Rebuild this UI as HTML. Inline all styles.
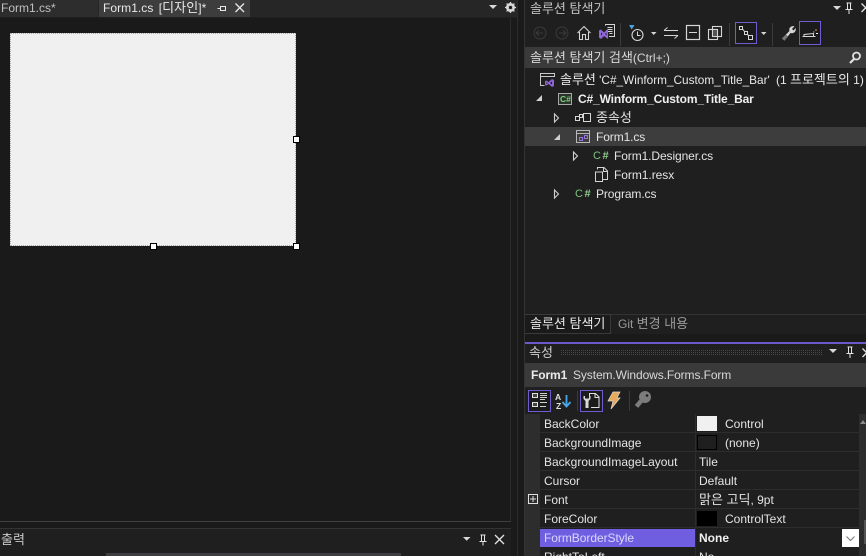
<!DOCTYPE html>
<html><head><meta charset="utf-8">
<style>
html,body{margin:0;padding:0;width:866px;height:556px;overflow:hidden;background:#1a1a1a}
body{position:relative;font-family:"Liberation Sans","Noto Sans CJK KR",sans-serif;font-size:12px;color:#e4e4e4}
.a{position:absolute}
.t{position:absolute;white-space:nowrap;line-height:16px;height:16px}
.k{font-size:13px;line-height:16px}
svg{position:absolute;overflow:visible}
.row{position:absolute;left:540px;width:319px;height:18px;border-bottom:1px solid #2d2d2d}
.v{position:absolute;left:695px;width:1px;background:#2d2d2d;top:414px;height:142px}
.c{font-size:11px;color:#7cc47c;letter-spacing:1.500px}
.c b{color:#8fd08f}
</style></head><body>

<!-- left tab bar -->
<div class="a" style="left:0;top:0;width:517px;height:17px;background:#262626"></div>
<div class="a" style="left:0;top:0;width:98px;height:17px;background:#2d2d2d"></div>
<div class="a" style="left:99px;top:0;width:151px;height:17px;background:#3d3d3d"></div>
<div class="a" style="left:0;top:17px;width:517px;height:1px;background:#1f1f1f"></div>
<div class="t" style="left:1px;top:0;color:#c0c0c0">Form1.cs*</div>
<div class="t" style="left:103px;top:0;color:#e8e8e8;word-spacing:2px;letter-spacing:.05px">Form1.cs [<span class="k">디자인</span>]*</div>
<svg style="left:217px;top:4px" width="10" height="10"><path d="M0.5 4.5H3M3.5 2V7M3.5 2.5H8.5V6.5H3.5" fill="none" stroke="#e8e8e8"/></svg>
<svg style="left:235px;top:3px" width="10" height="10"><path d="M0.5 0.5L9 9M9 0.5L0.5 9" fill="none" stroke="#e8e8e8" stroke-width="1.3"/></svg>
<svg style="left:489px;top:5px" width="9" height="5"><path d="M0 0H8L4 4Z" fill="#d8d8d8"/></svg>
<svg style="left:505px;top:2px" width="11" height="11"><circle cx="5.5" cy="5.5" r="3.4" fill="none" stroke="#d8d8d8" stroke-width="2.2"/><path d="M5.5 0V11M0 5.5H11M1.6 1.6L9.4 9.4M9.4 1.6L1.6 9.4" stroke="#d8d8d8" stroke-width="1.3"/><circle cx="5.5" cy="5.5" r="1.6" fill="#1a1a1a"/></svg>

<!-- designer form -->
<div class="a" style="left:10px;top:33px;width:284px;height:211px;background:#f0f0f0;border:1px dotted #a8a8a8"></div>
<div class="a" style="left:293px;top:136px;width:5px;height:5px;background:#fff;border:1px solid #000"></div>
<div class="a" style="left:150px;top:243px;width:5px;height:5px;background:#fff;border:1px solid #000"></div>
<div class="a" style="left:293px;top:243px;width:5px;height:5px;background:#fff;border:1px solid #000"></div>

<!-- design area border -->
<div class="a" style="left:0;top:521px;width:511px;height:1px;background:#3f3f3f"></div>
<div class="a" style="left:510px;top:18px;width:1px;height:503px;background:#2b2b2b"></div>

<!-- output panel -->
<div class="a" style="left:0;top:528px;width:511px;height:28px;background:#1f1f1f;border-top:1px solid #333"></div>
<div class="t" style="left:1px;top:532px;color:#c8c8c8"><span class="k">출력</span></div>
<svg style="left:463px;top:537px" width="8" height="5"><path d="M0 0H7.5L3.7 3.8Z" fill="#d8d8d8"/></svg>
<svg style="left:477px;top:534px" width="12" height="12" ><path d="M3.5 1H8.5M4.5 1V7M7.5 1V7M2.5 7.5H9.5M6 7.5V11.5" fill="none" stroke="#e4e4e4"/></svg>
<svg style="left:494px;top:534px" width="11" height="11"><path d="M1 1L10 10M10 1L1 10" fill="none" stroke="#e4e4e4" stroke-width="1.3"/></svg>
<div class="a" style="left:106px;top:553px;width:295px;height:3px;background:#3e3e42"></div>

<!-- right side -->
<div class="a" style="left:517px;top:0;width:1px;height:556px;background:#2b2b2b"></div>
<div class="a" style="left:524px;top:0;width:342px;height:556px;background:#1f1f1f;border-left:1px solid #333;box-sizing:border-box"></div>

<!-- solution explorer header -->
<div class="t" style="left:530px;top:1px;color:#c0c0c0"><span class="k">솔루션 탐색기</span></div>
<svg style="left:833px;top:6px" width="9" height="5"><path d="M0 0H8L4 4Z" fill="#d8d8d8"/></svg>
<svg style="left:843px;top:2px" width="12" height="13"><path d="M3.5 1H8.5M4.5 1V7M7.5 1V7M2.5 7.5H9.5M6 7.5V12" fill="none" stroke="#e4e4e4"/></svg>
<svg style="left:861px;top:3px" width="10" height="10"><path d="M0.5 0.5L9 9M9 0.5L0.5 9" fill="none" stroke="#e4e4e4" stroke-width="1.3"/></svg>

<!-- toolbar -->
<svg style="left:525px;top:18px" width="341" height="29">
 <circle cx="15" cy="15" r="6" fill="none" stroke="#3a3a3a"/><path d="M18 15H11.500M14 12L11 15L14 18" fill="none" stroke="#3a3a3a"/>
 <circle cx="37" cy="15" r="6" fill="none" stroke="#3a3a3a"/><path d="M34 15H40.500M38 12L41 15L38 18" fill="none" stroke="#3a3a3a"/>
 <path d="M52.500 15L59 8.500L65.500 15M54.500 14V21.500H57.500V16.500H60.500V21.500H63.500V14" fill="none" stroke="#d6d6d6" stroke-width="1.100"/>
 <path d="M80.500 7.500V6.500H89.500V18.500H84" fill="none" stroke="#d6d6d6"/><path d="M82.500 9.500H87.500M82.500 11.500H87.500M83 13.500H87.500M84.500 15.500H87.500" stroke="#d6d6d6"/>
 <path d="M74 12.500L76 11.500L79 14.500L83 10.500V21L79 18L76 21L74 19.500ZM76 14.500V17.500L77.500 16ZM80 16L81.500 17.500V14.500Z" fill="#9168d8" fill-rule="evenodd"/>
 <rect x="95" y="5" width="1" height="23" fill="#3b3b3b"/>
 <path d="M104 7H109.500L106.700 11.500Z" fill="#4aa3e8"/>
 <circle cx="112.500" cy="17" r="5.500" fill="none" stroke="#d6d6d6" stroke-width="1.100"/><path d="M112.500 13.500V17.500H115.500" fill="none" stroke="#d6d6d6"/>
 <path d="M126 14H131.500L128.700 17Z" fill="#d6d6d6"/>
 <path d="M139 12.500H153M139 12.500L142.500 9.500M139 17.500H153M153 17.500L149.500 20.500" fill="none" stroke="#d6d6d6"/>
 <rect x="161.500" y="7.500" width="13" height="14" fill="none" stroke="#d6d6d6" stroke-width="1.200"/><path d="M164 14.500H172" stroke="#d6d6d6"/>
 <rect x="187.500" y="8.500" width="9" height="10" fill="none" stroke="#d6d6d6" stroke-width="1.100"/><rect x="183.500" y="11.500" width="9" height="10" fill="none" stroke="#d6d6d6" stroke-width="1.100"/><rect x="188" y="12" width="4" height="6" fill="#555"/>
 <rect x="204" y="5" width="1" height="23" fill="#3b3b3b"/>
 <rect x="210.500" y="4.500" width="21" height="21" fill="#1b1b1b" stroke="#6d5dd3" stroke-width="1"/>
 <rect x="214.500" y="8.500" width="3" height="3" fill="none" stroke="#d6d6d6"/><rect x="219.500" y="13.500" width="3" height="3" fill="none" stroke="#d6d6d6"/><rect x="223.500" y="17.500" width="4" height="4" fill="none" stroke="#d6d6d6"/>
 <path d="M217.500 11L219.500 13.500M222.500 16L223.500 18" stroke="#d6d6d6"/>
 <path d="M236 14H241.500L238.700 17Z" fill="#d6d6d6"/>
 <rect x="247" y="5" width="1" height="23" fill="#3b3b3b"/>
 <path d="M257 20.500L264.500 13C263.500 10 266 7.500 269.500 8.300L267 11L268.500 12.500L270.700 10C271.500 13.500 268.500 16 265.500 15L259.500 22.500Z" fill="#d6d6d6"/><path d="M257 20.500L261 16.500L263 18.500L259.500 22.500Z" fill="#777"/>
 <rect x="274.500" y="3.500" width="21" height="23" fill="#1b1b1b" stroke="#6d5dd3"/>
 <path d="M277.500 18.500H290.500M279 18.500V16.500L288.500 15.500V18.500" fill="none" stroke="#d6d6d6"/>
 <path d="M290 12H292M288 14H289.500" stroke="#d89a3c"/><rect x="291" y="15" width="2" height="1" fill="#eee"/>
</svg>

<!-- search -->
<div class="a" style="left:525px;top:47px;width:341px;height:21px;background:#3a3a3a"></div>
<div class="t" style="left:530px;top:50px;color:#d8d8d8"><span class="k">솔루션 탐색기 검색</span>(Ctrl+;)</div>
<svg style="left:849px;top:51px" width="13" height="13"><circle cx="7.500" cy="5" r="3.500" fill="none" stroke="#e0e0e0" stroke-width="1.800"/><path d="M5 8L1 12" stroke="#e0e0e0" stroke-width="2.200"/></svg>

<!-- tree -->
<div class="a" style="left:525px;top:127px;width:341px;height:19px;background:#3d3d3d"></div>
<svg style="left:525px;top:68px" width="341" height="136">
 <path d="M19.500 17.500H15.500V5.500H29.500V9M15.500 8.500H29.500" fill="none" stroke="#c8c8c8"/>
 <path d="M20 13L21.500 12.500L23.500 14L27 11L29 12V18L27 19L23.500 16L21.500 17.500L20 17Z M21.500 14V16.200L22.500 15Z M25 15L27 16.500V13.500Z" fill="#8e63d4" fill-rule="evenodd"/>
 <path d="M11 33L17 33V27Z" fill="#d0d0d0"/>
 <path d="M29.500 46V54L33.500 50Z" fill="none" stroke="#d0d0d0" stroke-width="1.100"/>
 <path d="M29 72L35 72V66Z" fill="#d0d0d0"/>
 <path d="M48.500 84V92L52.500 88Z" fill="none" stroke="#d0d0d0" stroke-width="1.100"/>
 <path d="M29.500 122V130L33.500 126Z" fill="none" stroke="#d0d0d0" stroke-width="1.100"/>
 <rect x="33.500" y="25.500" width="13" height="11" fill="#2a332a" stroke="#a8a8a8"/>
 <rect x="50.500" y="48.500" width="4" height="4" fill="none" stroke="#d8d8d8"/><rect x="54.500" y="46.500" width="3" height="3" fill="none" stroke="#d8d8d8"/><rect x="58.500" y="45.500" width="7" height="8" fill="none" stroke="#d8d8d8"/>
 <rect x="51.500" y="62.500" width="13" height="12" fill="none" stroke="#b8b8b8"/><path d="M52 65.500H64" stroke="#b8b8b8"/>
 <rect x="54.500" y="69.500" width="3" height="3" fill="none" stroke="#9a74dd"/><rect x="59.500" y="67.500" width="3" height="3" fill="none" stroke="#9a74dd"/>
 <path d="M72.500 101.500V99.500H79L82.500 103V111.500H78M72.500 104H70.500V113.500H77.500V104Z" fill="none" stroke="#d4d4d4"/><path d="M78.500 100V103.500H82.500" fill="none" stroke="#d4d4d4"/>
</svg>
<div class="t" style="left:560px;top:72px;font-size:11.800px;color:#e8e8e8"><span class="k">솔루션</span> 'C#_Winform_Custom_Title_Bar'</div>
<div class="t" style="left:776px;top:72px;color:#e8e8e8">(1 <span class="k">프로젝트의</span> 1)</div>
<div class="t" style="left:560px;top:91px;font-size:8.500px;font-weight:bold;color:#7ed07e">C#</div>
<div class="t" style="left:578px;top:91px;font-weight:bold;color:#f0f0f0;letter-spacing:-.15px">C#_Winform_Custom_Title_Bar</div>
<div class="t" style="left:596px;top:110px"><span class="k">종속성</span></div>
<div class="t" style="left:596px;top:129px;letter-spacing:-.1px">Form1.cs</div>
<div class="t c" style="left:593px;top:148px">C<b>#</b></div>
<div class="t" style="left:614px;top:148px;letter-spacing:-.1px">Form1.Designer.cs</div>
<div class="t" style="left:614px;top:167px;letter-spacing:-.05px">Form1.resx</div>
<div class="t c" style="left:575px;top:186px">C<b>#</b></div>
<div class="t" style="left:596px;top:186px;letter-spacing:-.1px">Program.cs</div>

<!-- bottom tabs -->
<div class="a" style="left:525px;top:314px;width:341px;height:1px;background:#333"></div>
<div class="a" style="left:525px;top:314px;width:86px;height:20px;background:#1a1a1a;border-right:1px solid #3a3a3a;border-bottom:1px solid #3a3a3a;border-top:1px solid #3a3a3a;box-sizing:border-box"></div>
<div class="t" style="left:530px;top:316px;color:#e8e8e8"><span class="k">솔루션 탐색기</span></div>
<div class="t" style="left:618px;top:316px;color:#9a9a9a">Git <span class="k">변경 내용</span></div>
<div class="a" style="left:525px;top:334px;width:341px;height:8px;background:#1a1a1a"></div>

<!-- properties -->
<div class="a" style="left:525px;top:342px;width:341px;height:2px;background:#6a5acd"></div>
<div class="t" style="left:529px;top:345px;color:#d0d0d0"><span class="k">속성</span></div>
<svg style="left:561px;top:350px" width="262" height="5"><defs><pattern id="d" width="2" height="2" patternUnits="userSpaceOnUse"><rect width="1" height="1" fill="#484848"/></pattern></defs><rect width="262" height="5" fill="url(#d)"/></svg>
<svg style="left:829px;top:349px" width="9" height="5"><path d="M0 0H8L4 4Z" fill="#d8d8d8"/></svg>
<svg style="left:844px;top:346px" width="12" height="13"><path d="M3.500 1H8.500M4.500 1V7M7.500 1V7M2.500 7.500H9.500M6 7.500V12" fill="none" stroke="#e4e4e4"/></svg>
<svg style="left:862px;top:348px" width="10" height="10"><path d="M0.500 0.500L9 9M9 0.500L0.500 9" fill="none" stroke="#e4e4e4" stroke-width="1.300"/></svg>
<div class="a" style="left:525px;top:363px;width:341px;height:24px;background:#3a3a3a"></div>
<div class="t" style="left:531px;top:367px;font-weight:bold;color:#ececec;letter-spacing:-.1px">Form1</div>
<div class="t" style="left:573px;top:367px;color:#d8d8d8;letter-spacing:-.1px">System.Windows.Forms.Form</div>

<!-- prop toolbar -->
<svg style="left:525px;top:387px" width="140" height="27">
 <rect x="3.500" y="3.500" width="22" height="21" fill="#1b1b1b" stroke="#6d5dd3"/>
 <rect x="7.500" y="6.500" width="5" height="4" fill="#444" stroke="#e0e0e0"/><rect x="7.500" y="15.500" width="5" height="4" fill="#444" stroke="#e0e0e0"/>
 <path d="M15 6.500H22M15 8.500H22M15 10.500H22M15 12.500H20M15 15.500H22M15 19.500H21" stroke="#d0d0d0"/>
 <text x="30" y="13" font-size="8.500" font-weight="bold" fill="#e0e0e0" font-family="Liberation Sans">A</text>
 <text x="31" y="22" font-size="8.500" font-weight="bold" fill="#e0e0e0" font-family="Liberation Sans">Z</text>
 <path d="M41.500 8V19M37.500 15L41.500 19.500L45.500 15" fill="none" stroke="#4aa8e8" stroke-width="1.800"/>
 <rect x="52" y="4" width="1" height="20" fill="#3b3b3b"/>
 <rect x="55.500" y="3.500" width="22" height="21" fill="#1b1b1b" stroke="#6d5dd3"/>
 <path d="M64.500 9V6.500H70.500L74 10V20.500H66" fill="none" stroke="#e0e0e0"/><path d="M70 7V10.500H74" fill="none" stroke="#e0e0e0"/>
 <path d="M58.500 9V12L60.500 14V21H63.500V14L65.500 12V9L64 9V11.500H60V9Z" fill="#d8d8d8"/>
 <path d="M88 5H95L92 11H95L86 22L88 14H83Z" fill="#e8a95a" stroke="#dddddd" stroke-width="0.700"/>
 <rect x="104" y="4" width="1" height="20" fill="#3b3b3b"/>
 <circle cx="120" cy="10" r="6" fill="#7c7c7c"/><circle cx="122" cy="8.500" r="1.300" fill="#1f1f1f"/>
 <path d="M116 14L111.500 19.500" stroke="#7c7c7c" stroke-width="4.500"/>
</svg>

<!-- grid -->
<div class="a" style="left:525px;top:414px;width:15px;height:142px;background:#2d2d2d"></div>
<div class="a" style="left:540px;top:414px;width:319px;height:142px;background:#1f1f1f"></div>
<div class="a" style="left:859px;top:414px;width:7px;height:142px;background:#2d2d2d"></div>
<div class="a" style="left:864px;top:520px;width:2px;height:24px;background:#555"></div>
<svg style="left:860px;top:420px" width="6" height="4"><path d="M0 4L3 0L6 4Z" fill="#8a8a8a"/></svg>
<div class="row" style="top:414px"></div><div class="row" style="top:433px"></div><div class="row" style="top:452px"></div><div class="row" style="top:471px"></div><div class="row" style="top:490px"></div><div class="row" style="top:509px"></div>
<div class="v"></div>
<div class="a" style="left:540px;top:529px;width:155px;height:18px;background:#6f5fe0"></div>

<div class="t" style="left:544px;top:416px">BackColor</div>
<div class="t" style="left:544px;top:435px">BackgroundImage</div>
<div class="t" style="left:544px;top:454px">BackgroundImageLayout</div>
<div class="t" style="left:544px;top:473px">Cursor</div>
<div class="t" style="left:544px;top:492px">Font</div>
<div class="t" style="left:544px;top:511px">ForeColor</div>
<div class="t" style="left:544px;top:530px;color:#d8d8ff;letter-spacing:-.05px">FormBorderStyle</div>
<div class="t" style="left:544px;top:549px">RightToLeft</div>

<div class="a" style="left:697px;top:416px;width:20px;height:15px;background:#f0f0f0;border:0"></div>
<div class="a" style="left:697px;top:435px;width:18px;height:13px;background:#1f1f1f;border:1px solid #000"></div>
<div class="a" style="left:697px;top:511px;width:20px;height:15px;background:#000"></div>
<div class="t" style="left:725px;top:416px">Control</div>
<div class="t" style="left:725px;top:435px">(none)</div>
<div class="t" style="left:699px;top:454px">Tile</div>
<div class="t" style="left:699px;top:473px">Default</div>
<div class="t" style="left:699px;top:492px"><span class="k">맑은 고딕</span>, 9pt</div>
<div class="t" style="left:725px;top:511px">ControlText</div>
<div class="t" style="left:699px;top:530px;font-weight:bold;color:#f0f0f0">None</div>
<div class="t" style="left:699px;top:549px">No</div>

<svg style="left:528px;top:494px" width="10" height="10"><rect x="0.500" y="0.500" width="9" height="9" fill="none" stroke="#e0e0e0"/><path d="M2 5H8M5 2V8" stroke="#e0e0e0"/></svg>
<div class="a" style="left:842px;top:529px;width:17px;height:18px;background:#fff"></div>
<svg style="left:846px;top:536px" width="10" height="6"><path d="M0.500 0.500L4.500 4.500L8.500 0.500" fill="none" stroke="#777"/></svg>

</body></html>
